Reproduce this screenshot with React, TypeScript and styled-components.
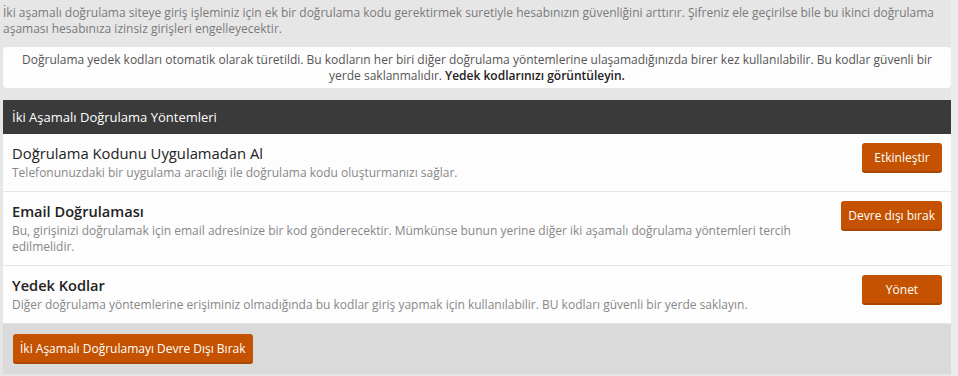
import styled, { createGlobalStyle } from 'styled-components';

const GlobalStyle = createGlobalStyle`
  html, body {
    margin: 0;
    padding: 0;
    background: #ececec;
    font-family: "Open Sans", "Liberation Sans", sans-serif;
  }
`

const Page = styled.div`
  width: 948px;
  padding: 5px 0 4px 3px;
  background: #e6e6e6;
`
const Intro = styled.p`
  margin: 0;
  font-size: 12px;
  line-height: 16px;
  color: #7a7a7a;
`
const Notice = styled.div`
  margin-top: 10px;
  padding: 5px 10px 4px;
  background: #fdfdfd;
  border-radius: 4px;
  text-align: center;
  font-size: 12px;
  line-height: 16px;
  color: #555;
  b {
    font-weight: 600;
    color: #222;
  }
`
const Panel = styled.section`
  margin-top: 12px;
  background: #fdfdfd;
`
const PanelHeader = styled.div`
  height: 34px;
  display: flex;
  align-items: center;
  padding: 0 9px;
  background: #3a3a3a;
  color: #fff;
  font-size: 13px;
`
const Row = styled.div`
  display: flex;
  justify-content: space-between;
  align-items: flex-start;
  gap: 20px;
  padding: 9px 9px 10px;
  border-bottom: 1px solid #e6e6e6;
  &:last-of-type {
    border-bottom: none;
  }
`
const Info = styled.div`
  flex: 1;
`
const Title = styled.div<{ $strong?: boolean }>`
  font-size: ${p => (p.$strong ? '14.6px' : '14.8px')};
  font-weight: ${p => (p.$strong ? 600 : 400)};
  line-height: 21px;
  color: #222;
`
const Desc = styled.div`
  font-size: 12px;
  line-height: 16px;
  color: #888;
  margin-top: 1px;
`
const Button = styled.button`
  flex-shrink: 0;
  min-width: 80px;
  height: 30px;
  padding: 0 7px;
  border: none;
  border-bottom: 2px solid #a94600;
  border-radius: 3px;
  background: #c45200;
  color: #fff;
  font-family: inherit;
  font-size: 12px;
  cursor: pointer;
`
const Footer = styled.div`
  padding: 10px;
  background: #dadada;
`

const methods = [
  {
    title: 'Doğrulama Kodunu Uygulamadan Al',
    desc: 'Telefonunuzdaki bir uygulama aracılığı ile doğrulama kodu oluşturmanızı sağlar.',
    action: 'Etkinleştir',
    strong: false,
  },
  {
    title: 'Email Doğrulaması',
    desc: 'Bu, girişinizi doğrulamak için email adresinize bir kod gönderecektir. Mümkünse bunun yerine diğer iki aşamalı doğrulama yöntemleri tercih edilmelidir.',
    action: 'Devre dışı bırak',
    strong: true,
  },
  {
    title: 'Yedek Kodlar',
    desc: 'Diğer doğrulama yöntemlerine erişiminiz olmadığında bu kodlar giriş yapmak için kullanılabilir. BU kodları güvenli bir yerde saklayın.',
    action: 'Yönet',
    strong: true,
  },
]

const App = () => {
  return (
    <>
      <GlobalStyle />
      <Page>
        <Intro>
          İki aşamalı doğrulama siteye giriş işleminiz için ek bir doğrulama kodu gerektirmek suretiyle hesabınızın güvenliğini arttırır. Şifreniz ele geçirilse bile bu ikinci doğrulama aşaması hesabınıza izinsiz girişleri engelleyecektir.
        </Intro>
        <Notice>
          Doğrulama yedek kodları otomatik olarak türetildi. Bu kodların her biri diğer doğrulama yöntemlerine ulaşamadığınızda birer kez kullanılabilir. Bu kodlar güvenli bir yerde saklanmalıdır. <b>Yedek kodlarınızı görüntüleyin.</b>
        </Notice>
        <Panel>
          <PanelHeader>İki Aşamalı Doğrulama Yöntemleri</PanelHeader>
          {methods.map(m => (
            <Row key={m.title}>
              <Info>
                <Title $strong={m.strong}>{m.title}</Title>
                <Desc>{m.desc}</Desc>
              </Info>
              <Button>{m.action}</Button>
            </Row>
          ))}
          <Footer>
            <Button>İki Aşamalı Doğrulamayı Devre Dışı Bırak</Button>
          </Footer>
        </Panel>
      </Page>
    </>
  );
};

export default App;
